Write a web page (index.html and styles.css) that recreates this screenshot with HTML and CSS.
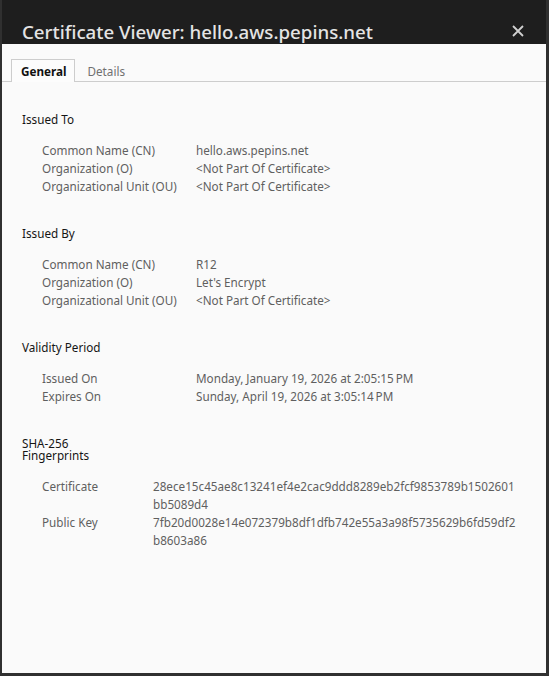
FILE: index.html
```html
<!DOCTYPE html>
<html>
<head>
<meta charset="utf-8">
<link rel="stylesheet" href="styles.css">
</head>
<body>
<div class="window">
  <header class="titlebar">
    <h1 class="title">Certificate Viewer: hello.aws.pepins.net</h1>
    <button class="close" aria-label="Close">
      <svg width="12" height="12" viewBox="0 0 12 12"><path d="M1 1L11 11M11 1L1 11" stroke="#d0d0d0" stroke-width="1.8" fill="none"/></svg>
    </button>
  </header>
  <main class="content">
    <nav class="tabs">
      <span class="tab active">General</span>
      <span class="tab">Details</span>
    </nav>
    <section class="panel">
      <div class="section">
        <h2 class="heading">Issued To</h2>
        <div class="rows">
          <span class="label">Common Name (CN)</span><span class="value">hello.aws.pepins.net</span>
          <span class="label">Organization (O)</span><span class="value">&lt;Not Part Of Certificate&gt;</span>
          <span class="label">Organizational Unit (OU)</span><span class="value">&lt;Not Part Of Certificate&gt;</span>
        </div>
      </div>
      <div class="section">
        <h2 class="heading">Issued By</h2>
        <div class="rows">
          <span class="label">Common Name (CN)</span><span class="value">R12</span>
          <span class="label">Organization (O)</span><span class="value">Let's Encrypt</span>
          <span class="label">Organizational Unit (OU)</span><span class="value">&lt;Not Part Of Certificate&gt;</span>
        </div>
      </div>
      <div class="section">
        <h2 class="heading">Validity Period</h2>
        <div class="rows">
          <span class="label">Issued On</span><span class="value">Monday, January 19, 2026 at 2:05:15&#8239;PM</span>
          <span class="label">Expires On</span><span class="value">Sunday, April 19, 2026 at 3:05:14&#8239;PM</span>
        </div>
      </div>
      <div class="section">
        <h2 class="heading narrow">SHA-256 Fingerprints</h2>
        <div class="rows fp">
          <span class="label">Certificate</span><span class="value">28ece15c45ae8c13241ef4e2cac9ddd8289eb2fcf9853789b1502601<br>bb5089d4</span>
          <span class="label">Public Key</span><span class="value">7fb20d0028e14e072379b8df1dfb742e55a3a98f5735629b6fd59df2<br>b8603a86</span>
        </div>
      </div>
    </section>
  </main>
</div>
</body>
</html>
```
FILE: styles.css
```css
* { box-sizing: border-box; }
html, body { margin: 0; padding: 0; }
body {
  background: #1f1f1f;
  font-family: "Noto Sans", "DejaVu Sans", sans-serif;
  width: 549px;
  height: 676px;
  overflow: hidden;
}
.window {
  width: 549px;
  height: 676px;
  display: flex;
  flex-direction: column;
  background: #1e1e1e;
  border-left: 2px solid #303030;
  border-right: 3px solid #303030;
  border-bottom: 3px solid #303030;
}
.titlebar {
  height: 44px;
  flex: none;
  display: flex;
  align-items: flex-end;
  justify-content: space-between;
  padding: 0 22px 0 20px;
  background: #1e1e1e;
}
.title {
  margin: 0;
  font-size: 18.7px;
  font-weight: 500;
  color: #e4e4e4;
  line-height: 24px;
}
.close {
  background: none;
  border: 0;
  padding: 0;
  margin: 0 0 7px;
  width: 12px;
  height: 12px;
  display: flex;
}
.content {
  flex: 1;
  background: #fafafa;
  display: flex;
  flex-direction: column;
}
.tabs {
  margin-top: 15px;
  height: 23px;
  display: flex;
  align-items: stretch;
  padding-left: 9px;
  border-bottom: 1px solid #cdcdcd;
  font-size: 11.7px;
}
.tab {
  display: flex;
  align-items: center;
  padding: 0 14px 0 12px;
  color: #707070;
  border: 1px solid transparent;
  border-bottom: 0;
}
.tab.active {
  color: #111;
  font-weight: 700;
  padding: 0 7px 0 9px;
  border-color: #cdcdcd;
  background: #fcfcfc;
  margin-bottom: -1px;
}
.panel {
  padding: 31px 22px 0 20px;
}
.section + .section { margin-top: 32px; }
.heading {
  margin: 0 0 16px;
  font-size: 11.7px;
  font-weight: 400;
  line-height: 12px;
  color: #151515;
}
.heading.narrow { width: 80px; }
.rows {
  display: grid;
  grid-template-columns: 154px 1fr;
  padding-left: 20px;
  font-size: 11.7px;
  line-height: 18px;
  color: #5f5f5f;
}
.rows.fp { grid-template-columns: 111px 1fr; }
```
